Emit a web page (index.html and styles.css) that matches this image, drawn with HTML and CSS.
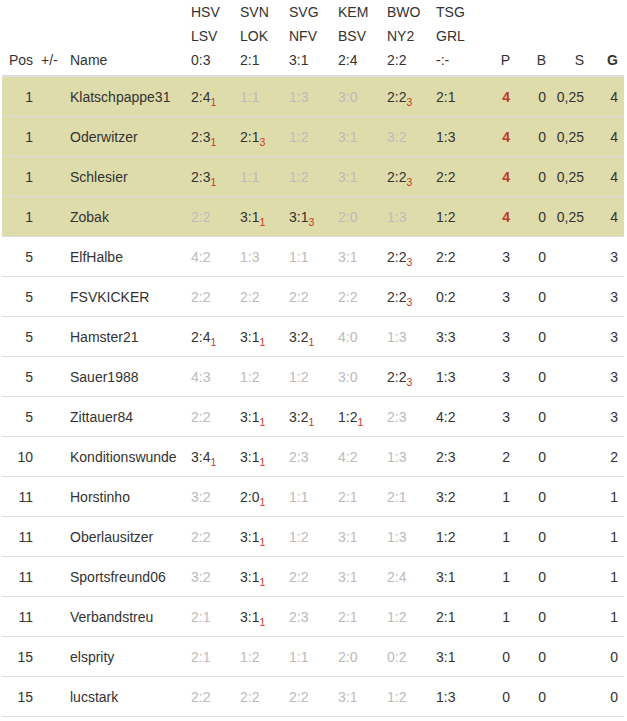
FILE: index.html
```html
<!DOCTYPE html>
<html lang="de">
<head>
<meta charset="utf-8">
<title>Tabelle</title>
<link rel="stylesheet" href="styles.css">
</head>
<body>
<div class="wrap">
<table class="standings">
<colgroup>
<col class="c-pos"><col class="c-diff"><col class="c-name">
<col class="c-g"><col class="c-g"><col class="c-g"><col class="c-g"><col class="c-g"><col class="c-g">
<col class="c-p"><col class="c-b"><col class="c-s"><col class="c-t">
</colgroup>
<thead>
<tr>
<th class="r">Pos</th><th>+/-</th><th>Name</th>
<th>HSV<br>LSV<br>0:3</th>
<th>SVN<br>LOK<br>2:1</th>
<th>SVG<br>NFV<br>3:1</th>
<th>KEM<br>BSV<br>2:4</th>
<th>BWO<br>NY2<br>2:2</th>
<th>TSG<br>GRL<br>-:-</th>
<th class="r">P</th><th class="r">B</th><th class="r">S</th><th class="r last strong">G</th>
</tr>
</thead>
<tbody>
<tr class="hl"><td class="r">1</td><td></td><td>Klatschpappe31</td><td>2:4<sub>1</sub></td><td class="m">1:1</td><td class="m">1:3</td><td class="m">3:0</td><td>2:2<sub>3</sub></td><td>2:1</td><td class="r pts">4</td><td class="r">0</td><td class="r">0,25</td><td class="r last">4</td></tr>
<tr class="hl"><td class="r">1</td><td></td><td>Oderwitzer</td><td>2:3<sub>1</sub></td><td>2:1<sub>3</sub></td><td class="m">1:2</td><td class="m">3:1</td><td class="m">3:2</td><td>1:3</td><td class="r pts">4</td><td class="r">0</td><td class="r">0,25</td><td class="r last">4</td></tr>
<tr class="hl"><td class="r">1</td><td></td><td>Schlesier</td><td>2:3<sub>1</sub></td><td class="m">1:1</td><td class="m">1:2</td><td class="m">3:1</td><td>2:2<sub>3</sub></td><td>2:2</td><td class="r pts">4</td><td class="r">0</td><td class="r">0,25</td><td class="r last">4</td></tr>
<tr class="hl"><td class="r">1</td><td></td><td>Zobak</td><td class="m">2:2</td><td>3:1<sub>1</sub></td><td>3:1<sub>3</sub></td><td class="m">2:0</td><td class="m">1:3</td><td>1:2</td><td class="r pts">4</td><td class="r">0</td><td class="r">0,25</td><td class="r last">4</td></tr>
<tr><td class="r">5</td><td></td><td>ElfHalbe</td><td class="m">4:2</td><td class="m">1:3</td><td class="m">1:1</td><td class="m">3:1</td><td>2:2<sub>3</sub></td><td>2:2</td><td class="r">3</td><td class="r">0</td><td class="r"></td><td class="r last">3</td></tr>
<tr><td class="r">5</td><td></td><td>FSVKICKER</td><td class="m">2:2</td><td class="m">2:2</td><td class="m">2:2</td><td class="m">2:2</td><td>2:2<sub>3</sub></td><td>0:2</td><td class="r">3</td><td class="r">0</td><td class="r"></td><td class="r last">3</td></tr>
<tr><td class="r">5</td><td></td><td>Hamster21</td><td>2:4<sub>1</sub></td><td>3:1<sub>1</sub></td><td>3:2<sub>1</sub></td><td class="m">4:0</td><td class="m">1:3</td><td>3:3</td><td class="r">3</td><td class="r">0</td><td class="r"></td><td class="r last">3</td></tr>
<tr><td class="r">5</td><td></td><td>Sauer1988</td><td class="m">4:3</td><td class="m">1:2</td><td class="m">1:2</td><td class="m">3:0</td><td>2:2<sub>3</sub></td><td>1:3</td><td class="r">3</td><td class="r">0</td><td class="r"></td><td class="r last">3</td></tr>
<tr><td class="r">5</td><td></td><td>Zittauer84</td><td class="m">2:2</td><td>3:1<sub>1</sub></td><td>3:2<sub>1</sub></td><td>1:2<sub>1</sub></td><td class="m">2:3</td><td>4:2</td><td class="r">3</td><td class="r">0</td><td class="r"></td><td class="r last">3</td></tr>
<tr><td class="r">10</td><td></td><td>Konditionswunde</td><td>3:4<sub>1</sub></td><td>3:1<sub>1</sub></td><td class="m">2:3</td><td class="m">4:2</td><td class="m">1:3</td><td>2:3</td><td class="r">2</td><td class="r">0</td><td class="r"></td><td class="r last">2</td></tr>
<tr><td class="r">11</td><td></td><td>Horstinho</td><td class="m">3:2</td><td>2:0<sub>1</sub></td><td class="m">1:1</td><td class="m">2:1</td><td class="m">2:1</td><td>3:2</td><td class="r">1</td><td class="r">0</td><td class="r"></td><td class="r last">1</td></tr>
<tr><td class="r">11</td><td></td><td>Oberlausitzer</td><td class="m">2:2</td><td>3:1<sub>1</sub></td><td class="m">1:2</td><td class="m">3:1</td><td class="m">1:3</td><td>1:2</td><td class="r">1</td><td class="r">0</td><td class="r"></td><td class="r last">1</td></tr>
<tr><td class="r">11</td><td></td><td>Sportsfreund06</td><td class="m">3:2</td><td>3:1<sub>1</sub></td><td class="m">2:2</td><td class="m">3:1</td><td class="m">2:4</td><td>3:1</td><td class="r">1</td><td class="r">0</td><td class="r"></td><td class="r last">1</td></tr>
<tr><td class="r">11</td><td></td><td>Verbandstreu</td><td class="m">2:1</td><td>3:1<sub>1</sub></td><td class="m">2:3</td><td class="m">2:1</td><td class="m">1:2</td><td>2:1</td><td class="r">1</td><td class="r">0</td><td class="r"></td><td class="r last">1</td></tr>
<tr><td class="r">15</td><td></td><td>elsprity</td><td class="m">2:1</td><td class="m">1:2</td><td class="m">1:1</td><td class="m">2:0</td><td class="m">0:2</td><td>3:1</td><td class="r">0</td><td class="r">0</td><td class="r"></td><td class="r last">0</td></tr>
<tr><td class="r">15</td><td></td><td>lucstark</td><td class="m">2:2</td><td class="m">2:2</td><td class="m">2:2</td><td class="m">3:1</td><td class="m">1:2</td><td>1:3</td><td class="r">0</td><td class="r">0</td><td class="r"></td><td class="r last">0</td></tr>
</tbody>
</table>
</div>
</body>
</html>
```

FILE: styles.css
```css
html, body {
  margin: 0;
  padding: 0;
  background: #fff;
}
.wrap {
  padding: 0 3px 0 2px;
}
.standings {
  width: 622px;
  table-layout: fixed;
  border-collapse: collapse;
  font-family: "Liberation Sans", Arial, sans-serif;
  font-size: 14px;
  color: #333;
}
.c-pos { width: 35px; }
.c-diff { width: 29px; }
.c-name { width: 121px; }
.c-g { width: 49px; }
.c-p { width: 33px; }
.c-b { width: 36px; }
.c-s { width: 38px; }
.c-t { width: 36px; }

.standings th {
  font-weight: normal;
  text-align: left;
  vertical-align: bottom;
  line-height: 24px;
  padding: 0 4px 3px;
  border-bottom: 2px solid #ddd;
  white-space: nowrap;
}
.standings td {
  line-height: 20px;
  padding: 10px 4px 9px;
  border-bottom: 1px solid #ddd;
  white-space: nowrap;
  vertical-align: baseline;
}
.standings .r { text-align: right; }
.standings .last { padding-right: 6px; }
.standings .strong { font-weight: bold; }
.standings tr.hl td { background: #dfdcab; }
.standings td.m { color: #bbb; }
.standings td.pts {
  color: #c0392b;
  font-weight: bold;
}
.standings sub {
  font-size: 10.5px;
  line-height: 0;
  position: relative;
  vertical-align: baseline;
  top: 4px;
  color: #c8391f;
}
```
